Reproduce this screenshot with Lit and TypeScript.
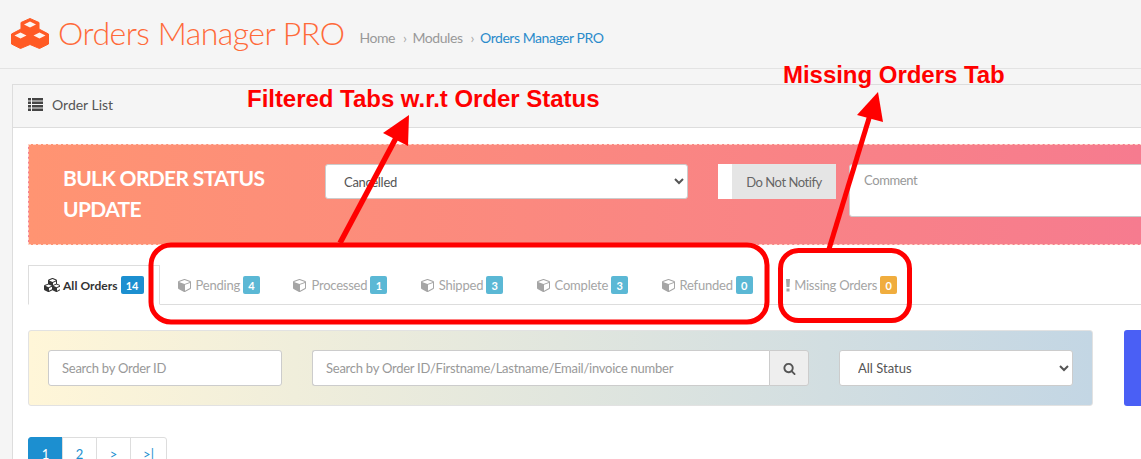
import { LitElement, html, css, svg } from "lit";
import { customElement } from "lit/decorators.js";

const CUBE = "M896 1629l640-349v-636l-640 233v752zm-64-865l698-254-698-254-698 254zm832-252v768q0 35-18 65t-49 47l-704 384q-28 16-61 16t-61-16l-704-384q-31-17-49-47t-18-65v-768q0-40 23-73t61-47l704-256q22-8 44-8t44 8l704 256q38 14 61 47t23 73z";
const CUBES = "M640 1632l384-192v-314l-384 164v342zm-64-454l404-173-404-173-404 173zm1088 454l384-192v-314l-384 164v342zm-64-454l404-173-404-173-404 173zm-448-293l384-165v-266l-384 164v267zm-64-379l441-189-441-189-441 189zm1088 518v416q0 36-19 67t-52 47l-448 224q-25 14-57 14t-57-14l-448-224q-4-2-7-4-2 2-7 4l-448 224q-25 14-57 14t-57-14l-448-224q-33-16-52-47t-19-67v-416q0-38 21.500-70t56.500-48l434-186v-400q0-38 21.500-70t56.500-48l448-192q23-10 50-10t50 10l448 192q35 16 56.500 48t21.500 70v400l434 186q36 16 57 48t21 70z";
const SEARCH = "M1216 832q0-185-131.500-316.500t-316.500-131.500-316.500 131.500-131.500 316.500 131.500 316.500 316.500 131.500 316.500-131.500 131.500-316.500zm512 832q0 52-38 90t-90 38q-54 0-90-38l-343-342q-179 124-399 124-143 0-273.500-55.500t-225-150-150-225-55.500-273.500 55.500-273.500 150-225 225-150 273.500-55.500 273.500 55.500 225 150 150 225 55.500 273.500q0 220-124 399l343 343q37 37 37 90z";

const cubeIcon = html`<svg class="ico" viewBox="0 0 1792 1792" width="14" height="14"><path fill="currentColor" d=${CUBE}></path></svg>`;

const TABS = [
  { label: "Pending", n: 4 },
  { label: "Processed", n: 1 },
  { label: "Shipped", n: 3 },
  { label: "Complete", n: 3 },
  { label: "Refunded", n: 0 },
];

@customElement("app-root")
export class AppRoot extends LitElement {
  static styles = css`
    :host {
      display: block;
      position: relative;
      width: 1141px;
      height: 459px;
      overflow: hidden;
      background: #f5f5f5;
      font-family: "Lato", "Open Sans", sans-serif;
      font-size: 13px;
      color: #555;
    }
    .head {
      box-sizing: border-box;
      height: 69px;
      border-bottom: 1px solid #e3e3e3;
      display: flex;
      align-items: center;
      padding-left: 11px;
    }
    .logo { flex: none; margin-right: 9px; margin-top: -1px; }
    h1 {
      margin: -2px 15px 0 0;
      font-size: 32px;
      font-weight: 300;
      letter-spacing: -0.5px;
      color: #ff6a39;
      white-space: nowrap;
      line-height: 1;
    }
    .crumb { display: flex; align-items: center; font-size: 14px; letter-spacing: -0.45px; color: #999; margin-top: 6px; }
    .crumb .sep { margin: 0 6px 0 8px; color: #aaa; }
    .crumb .cur { color: #2a8bcb; }
    .panel {
      box-sizing: border-box;
      width: 1300px;
      margin: 15px 0 0 12px;
      border: 1px solid #ddd;
      background: #fff;
      height: 500px;
    }
    .panel-head {
      box-sizing: border-box;
      height: 43px;
      background: #f5f5f5;
      border-bottom: 1px solid #ddd;
      display: flex;
      align-items: center;
      padding: 0 0 3px 15px;
      gap: 9px;
      font-size: 14px;
      color: #555;
    }
    .list { display: block; flex: none; }
    .body { padding: 16px 15px; }
    .banner {
      box-sizing: border-box;
      height: 101px;
      width: 1240px;
      border: 1px dashed #ffd5c8;
      background: linear-gradient(90deg, #ff9472, #f2709c 130%);
      display: flex;
      align-items: flex-start;
      padding: 19px 0 0 34px;
    }
    .banner h2 {
      margin: -2px 0 0;
      width: 262px;
      flex: none;
      font-size: 21px;
      font-weight: 700;
      letter-spacing: -0.65px;
      line-height: 31px;
      color: #fff;
    }
    select {
      box-sizing: border-box;
      font: inherit;
      font-size: 13px;
      color: #555;
      background: #fff;
      border: 1px solid #ccc;
      border-radius: 3px;
      outline: none;
    }
    .banner select { width: 363px; height: 35px; padding-left: 14px; flex: none; letter-spacing: -0.3px; }
    .notify {
      box-sizing: border-box;
      flex: none;
      width: 118px;
      height: 35px;
      margin-left: 30px;
      background: #fff;
      padding-left: 14px;
      display: flex;
    }
    .notify span {
      flex: 1;
      background: #e5e5e5;
      display: flex;
      align-items: center;
      justify-content: center;
      font-size: 13px;
      letter-spacing: -0.45px;
      color: #666;
    }
    .comment {
      box-sizing: border-box;
      flex: none;
      width: 400px;
      height: 53px;
      margin-left: 13px;
      background: #fff;
      border: 1px solid #ccc;
      border-radius: 3px;
      padding: 7px 14px;
      color: #999;
      font-size: 13px;
      letter-spacing: -0.4px;
    }
    .tabs {
      box-sizing: border-box;
      margin-top: 20px;
      width: 1240px;
      height: 40px;
      border-bottom: 1px solid #ddd;
      display: flex;
    }
    .tab {
      box-sizing: border-box;
      height: 40px;
      border: 1px solid transparent;
      padding: 0 15px;
      margin-right: 1.4px;
      display: flex;
      align-items: center;
      color: #a5a5a5;
      font-size: 13px;
      letter-spacing: -0.22px;
      white-space: nowrap;
    }
    .tab.on {
      border-color: #ddd #ddd #fff;
      color: #333;
      font-weight: 700;
      font-size: 12px;
      letter-spacing: 0.05px;
      margin-right: 2px;
    }
    .on .ico { margin-right: 3px; }
    .ico { flex: none; margin-right: 4px; }
    .badge {
      margin-left: 3px;
      min-width: 17px;
      box-sizing: border-box;
      height: 18px;
      padding: 0 4px;
      border-radius: 2px;
      background: #5bb8d5;
      color: #fff;
      font-size: 11px;
      font-weight: 700;
      letter-spacing: 0;
      display: flex;
      align-items: center;
      justify-content: center;
    }
    .badge.blue { background: #1c8fd0; min-width: 23px; }
    .badge.warn { background: #f0ad3e; }
    .bang { flex: none; margin-right: 4px; }
    .filters { display: flex; gap: 31px; margin-top: 25px; width: 1240px; }
    .bar {
      box-sizing: border-box;
      flex: none;
      width: 1065px;
      height: 76px;
      border: 1px solid #e2e2e2;
      border-radius: 3px;
      background: linear-gradient(90deg, #fff6d8, #c3d6e4);
      padding: 19px;
      display: flex;
      gap: 30px;
    }
    .field {
      box-sizing: border-box;
      height: 36px;
      background: #fff;
      border: 1px solid #ccc;
      border-radius: 3px;
      display: flex;
      align-items: center;
      padding-left: 13px;
      color: #999;
      font-size: 13px;
      letter-spacing: -0.25px;
    }
    .f1 { width: 234px; flex: none; }
    .group { display: flex; width: 497px; flex: none; }
    .group .field { flex: 1; border-radius: 3px 0 0 3px; border-right: 0; }
    .gbtn {
      box-sizing: border-box;
      width: 40px;
      height: 36px;
      background: #eee;
      border: 1px solid #ccc;
      border-radius: 0 3px 3px 0;
      display: flex;
      align-items: center;
      justify-content: center;
      color: #555;
    }
    .bar select { width: 234px; height: 36px; padding-left: 14px; flex: none; }
    .go { flex: none; width: 100px; height: 76px; border-radius: 3px; background: #4a5ff5; }
    .pages { display: flex; margin-top: 31px; }
    .pages span {
      box-sizing: border-box;
      width: 35px;
      height: 34px;
      border: 1px solid #ddd;
      margin-left: -1px;
      display: flex;
      align-items: center;
      justify-content: center;
      color: #1c8fd0;
      font-size: 13px;
    }
    .pages span:first-child { margin-left: 0; background: #1c8fd0; border-color: #1c8fd0; color: #fff; border-radius: 3px 0 0 3px; }
    .pages span:last-child { width: 37px; border-radius: 0 3px 3px 0; }
    .marks { position: absolute; left: 0; top: 0; pointer-events: none; }
    .note {
      position: absolute;
      font-family: "Liberation Sans", Arial, sans-serif;
      font-weight: 700;
      font-size: 24px;
      letter-spacing: -0.03px;
      line-height: 28px;
      color: #f00;
      white-space: nowrap;
    }
    .n1 { left: 247px; top: 85px; }
    .n2 { left: 783px; top: 61px; }
  `;

  render() {
    return html`
      <div class="head">
        <svg class="logo" width="38" height="31" viewBox="0 0 38 31">
          <polygon fill="#ff5a24" stroke="#ff5a24" stroke-linejoin="round" points="19,0.500 28,4.500 28,11 37.500,16 37.500,26 28.500,30.500 19,26.500 9.500,30.500 0.500,26 0.500,16 10,11 10,4.500"></polygon>
          <g fill="#fff4ee">
            <polygon points="19,3.500 25,6.500 19,9.500 13,6.500"></polygon>
            <polygon points="9.500,14.500 15.500,17.500 9.500,20.500 3.500,17.500"></polygon>
            <polygon points="28.500,14.500 34.500,17.500 28.500,20.500 22.500,17.500"></polygon>
          </g>
        </svg>
        <h1>Orders Manager PRO</h1>
        <div class="crumb">Home<span class="sep">›</span>Modules<span class="sep">›</span><span class="cur">Orders Manager PRO</span></div>
      </div>
      <div class="panel">
        <div class="panel-head">
          <svg class="list" width="15" height="13" viewBox="0 0 15 13" fill="#444">
            <rect x="0" y="0" width="3" height="2.500"></rect><rect x="4" y="0" width="11" height="2.500"></rect>
            <rect x="0" y="3.500" width="3" height="2.500"></rect><rect x="4" y="3.500" width="11" height="2.500"></rect>
            <rect x="0" y="7" width="3" height="2.500"></rect><rect x="4" y="7" width="11" height="2.500"></rect>
            <rect x="0" y="10.500" width="3" height="2.500"></rect><rect x="4" y="10.500" width="11" height="2.500"></rect>
          </svg>
          Order List
        </div>
        <div class="body">
          <div class="banner">
            <h2>BULK ORDER STATUS UPDATE</h2>
            <select><option>Cancelled</option></select>
            <div class="notify"><span>Do Not Notify</span></div>
            <div class="comment">Comment</div>
          </div>
          <div class="tabs">
            <div class="tab on">
              <svg class="ico" viewBox="0 0 2048 1792" width="16" height="14"><path fill="currentColor" d=${CUBES}></path></svg>
              All Orders<span class="badge blue">14</span>
            </div>
            ${TABS.map((t) => html`<div class="tab">${cubeIcon}${t.label}<span class="badge">${t.n}</span></div>`)}
            <div class="tab">
              <svg class="bang" width="4" height="13" viewBox="0 0 4 13" fill="#a5a5a5"><polygon points="0,0 4,0 3.500,8 0.500,8"></polygon><rect x="0.500" y="9.500" width="3" height="3"></rect></svg>
              Missing Orders<span class="badge warn">0</span>
            </div>
          </div>
          <div class="filters">
            <div class="bar">
              <div class="field f1">Search by Order ID</div>
              <div class="group">
                <div class="field">Search by Order ID/Firstname/Lastname/Email/invoice number</div>
                <div class="gbtn"><svg width="13" height="13" viewBox="0 0 1792 1792"><path fill="currentColor" d=${SEARCH}></path></svg></div>
              </div>
              <select><option>All Status</option></select>
            </div>
            <div class="go"></div>
          </div>
          <div class="pages"><span>1</span><span>2</span><span>&gt;</span><span>&gt;|</span></div>
        </div>
      </div>
      <svg class="marks" width="1141" height="459" viewBox="0 0 1141 459" fill="none">
        ${svg`
          <rect x="151" y="245" width="616" height="77" rx="20" stroke="#f00" stroke-width="5"></rect>
          <rect x="780.5" y="250.500" width="129" height="70" rx="18" stroke="#f00" stroke-width="5"></rect>
          <line x1="340" y1="243" x2="396" y2="138" stroke="#f00" stroke-width="5.500"></line>
          <polygon points="409,115 408,146 383,133" fill="#f00"></polygon>
          <line x1="829" y1="249" x2="870" y2="115" stroke="#f00" stroke-width="5"></line>
          <polygon points="878,92 883,122 857,115" fill="#f00"></polygon>
        `}
      </svg>
      <div class="note n1">Filtered Tabs w.r.t Order Status</div>
      <div class="note n2">Missing Orders Tab</div>
    `;
  }
}
